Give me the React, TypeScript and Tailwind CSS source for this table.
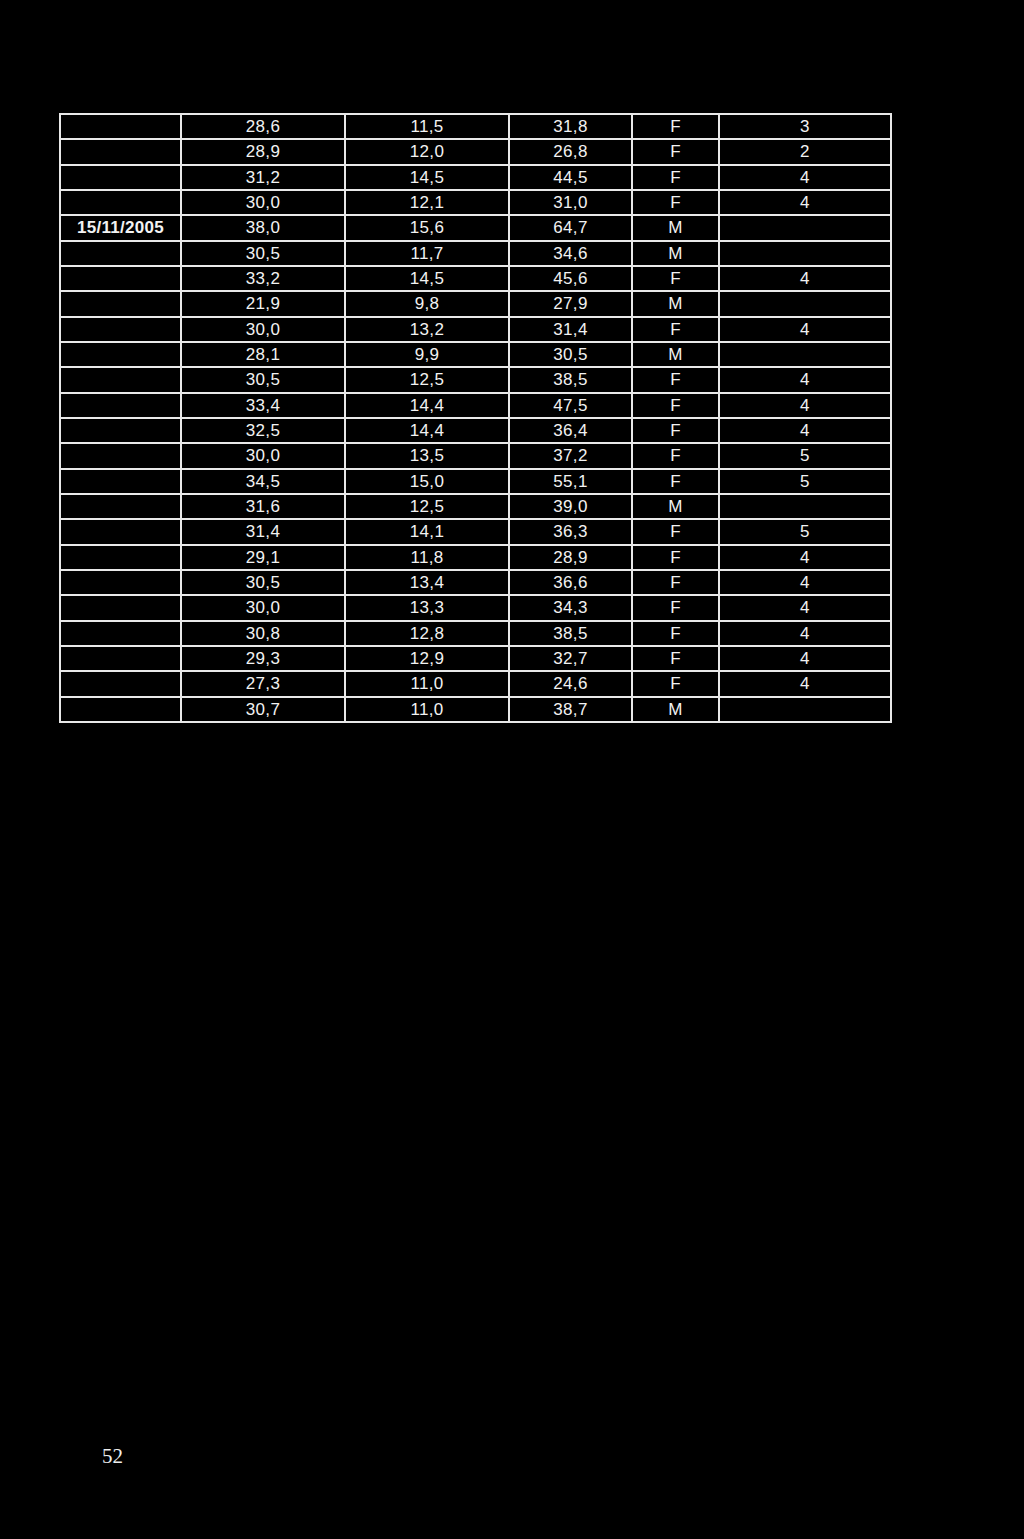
const rows: string[][] = [
  ['', '28,6', '11,5', '31,8', 'F', '3'],
  ['', '28,9', '12,0', '26,8', 'F', '2'],
  ['', '31,2', '14,5', '44,5', 'F', '4'],
  ['', '30,0', '12,1', '31,0', 'F', '4'],
  ['15/11/2005', '38,0', '15,6', '64,7', 'M', ''],
  ['', '30,5', '11,7', '34,6', 'M', ''],
  ['', '33,2', '14,5', '45,6', 'F', '4'],
  ['', '21,9', '9,8', '27,9', 'M', ''],
  ['', '30,0', '13,2', '31,4', 'F', '4'],
  ['', '28,1', '9,9', '30,5', 'M', ''],
  ['', '30,5', '12,5', '38,5', 'F', '4'],
  ['', '33,4', '14,4', '47,5', 'F', '4'],
  ['', '32,5', '14,4', '36,4', 'F', '4'],
  ['', '30,0', '13,5', '37,2', 'F', '5'],
  ['', '34,5', '15,0', '55,1', 'F', '5'],
  ['', '31,6', '12,5', '39,0', 'M', ''],
  ['', '31,4', '14,1', '36,3', 'F', '5'],
  ['', '29,1', '11,8', '28,9', 'F', '4'],
  ['', '30,5', '13,4', '36,6', 'F', '4'],
  ['', '30,0', '13,3', '34,3', 'F', '4'],
  ['', '30,8', '12,8', '38,5', 'F', '4'],
  ['', '29,3', '12,9', '32,7', 'F', '4'],
  ['', '27,3', '11,0', '24,6', 'F', '4'],
  ['', '30,7', '11,0', '38,7', 'M', ''],
];

const widths = ['w-[121px]', 'w-[164px]', 'w-[164px]', 'w-[123px]', 'w-[87px]', 'w-[172px]'];

export default function App() {
  return (
    <div className="w-[1024px] h-[1539px] bg-black text-[#f2f2f2] pt-[113px] pl-[59px]">
      <table className="w-[833px] table-fixed border-collapse font-['Liberation_Sans',Arial,sans-serif] text-[17px] leading-none">
        <colgroup>
          {widths.map((w, i) => (
            <col key={i} className={w} />
          ))}
        </colgroup>
        <tbody>
          {rows.map((row, r) => (
            <tr key={r} className="h-[25.33px]">
              {row.map((cell, c) => (
                <td
                  key={c}
                  className={
                    c === 0
                      ? 'border-2 border-[#e8e8e8] text-center font-bold tracking-[0.3px] p-0'
                      : 'border-2 border-[#e8e8e8] text-center p-0 tracking-[0.3px]'
                  }
                >
                  {cell}
                </td>
              ))}
            </tr>
          ))}
        </tbody>
      </table>
      <div className="mt-[723px] ml-[43px] font-['Liberation_Serif','Times_New_Roman',serif] text-[21px] leading-none text-[#eeeeee]">
        52
      </div>
    </div>
  );
}
